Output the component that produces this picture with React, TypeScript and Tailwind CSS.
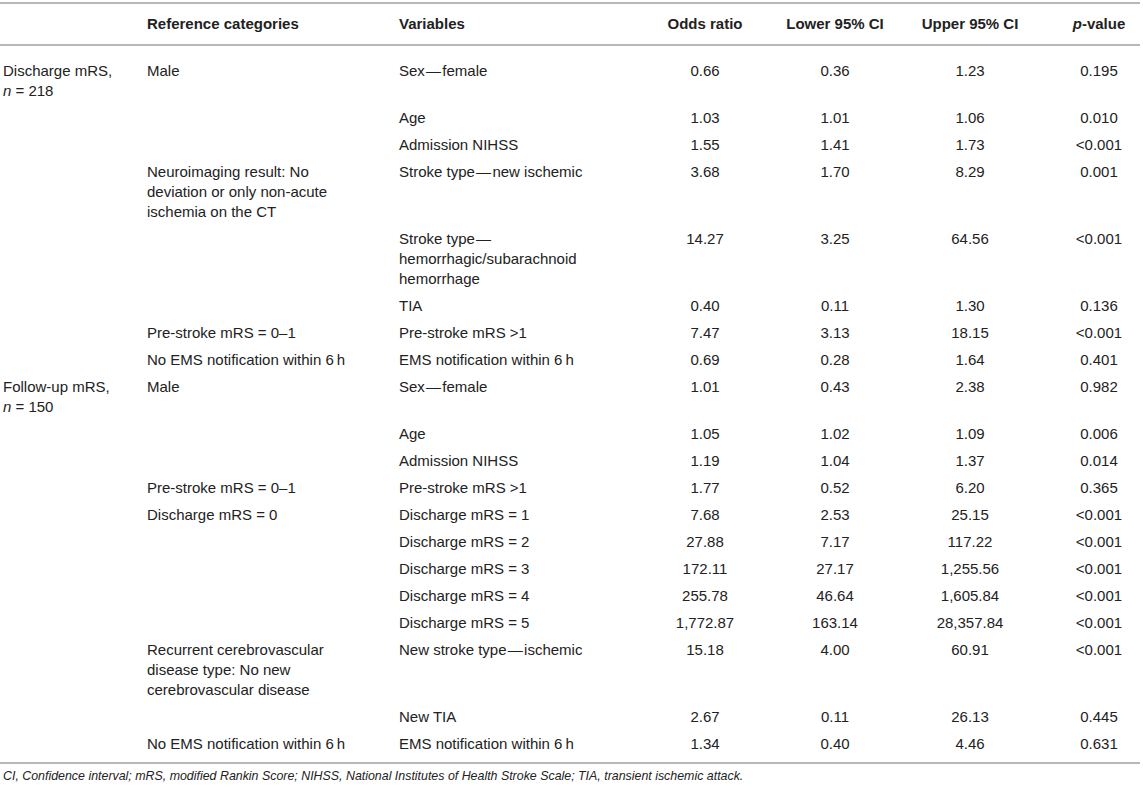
import React from "react";

type Row = {
  label?: React.ReactNode;
  ref?: string[];
  vars: string[];
  or: string;
  lo: string;
  up: string;
  p: string;
};

const D = "\u200A\u2014\u200A";
const NB = "\u202F";

const sec1: Row[] = [
  { label: <>Discharge mRS,<br /><i>n</i> = 218</>, ref: ["Male"], vars: [`Sex${D}female`], or: "0.66", lo: "0.36", up: "1.23", p: "0.195" },
  { vars: ["Age"], or: "1.03", lo: "1.01", up: "1.06", p: "0.010" },
  { vars: ["Admission NIHSS"], or: "1.55", lo: "1.41", up: "1.73", p: "<0.001" },
  { ref: ["Neuroimaging result: No", "deviation or only non-acute", "ischemia on the CT"], vars: [`Stroke type${D}new ischemic`], or: "3.68", lo: "1.70", up: "8.29", p: "0.001" },
  { vars: [`Stroke type${D}`, "hemorrhagic/subarachnoid", "hemorrhage"], or: "14.27", lo: "3.25", up: "64.56", p: "<0.001" },
  { vars: ["TIA"], or: "0.40", lo: "0.11", up: "1.30", p: "0.136" },
  { ref: ["Pre-stroke mRS = 0\u20131"], vars: ["Pre-stroke mRS >1"], or: "7.47", lo: "3.13", up: "18.15", p: "<0.001" },
  { ref: [`No EMS notification within 6${NB}h`], vars: [`EMS notification within 6${NB}h`], or: "0.69", lo: "0.28", up: "1.64", p: "0.401" },
];

const sec2: Row[] = [
  { label: <>Follow-up mRS,<br /><i>n</i> = 150</>, ref: ["Male"], vars: [`Sex${D}female`], or: "1.01", lo: "0.43", up: "2.38", p: "0.982" },
  { vars: ["Age"], or: "1.05", lo: "1.02", up: "1.09", p: "0.006" },
  { vars: ["Admission NIHSS"], or: "1.19", lo: "1.04", up: "1.37", p: "0.014" },
  { ref: ["Pre-stroke mRS = 0\u20131"], vars: ["Pre-stroke mRS >1"], or: "1.77", lo: "0.52", up: "6.20", p: "0.365" },
  { ref: ["Discharge mRS = 0"], vars: ["Discharge mRS = 1"], or: "7.68", lo: "2.53", up: "25.15", p: "<0.001" },
  { vars: ["Discharge mRS = 2"], or: "27.88", lo: "7.17", up: "117.22", p: "<0.001" },
  { vars: ["Discharge mRS = 3"], or: "172.11", lo: "27.17", up: "1,255.56", p: "<0.001" },
  { vars: ["Discharge mRS = 4"], or: "255.78", lo: "46.64", up: "1,605.84", p: "<0.001" },
  { vars: ["Discharge mRS = 5"], or: "1,772.87", lo: "163.14", up: "28,357.84", p: "<0.001" },
  { ref: ["Recurrent cerebrovascular", "disease type: No new", "cerebrovascular disease"], vars: [`New stroke type${D}ischemic`], or: "15.18", lo: "4.00", up: "60.91", p: "<0.001" },
  { vars: ["New TIA"], or: "2.67", lo: "0.11", up: "26.13", p: "0.445" },
  { ref: [`No EMS notification within 6${NB}h`], vars: [`EMS notification within 6${NB}h`], or: "1.34", lo: "0.40", up: "4.46", p: "0.631" },
];

const rows = [...sec1, ...sec2];

function Lines({ items }: { items?: string[] }) {
  if (!items) return null;
  return (
    <>
      {items.map((t, i) => (
        <div key={i} className="whitespace-nowrap">{t}</div>
      ))}
    </>
  );
}

export default function App() {
  return (
    <div className="w-[1143px] h-[787px] bg-white pt-[2px] font-['Liberation_Sans',Arial,sans-serif] text-[15px] leading-[20px] text-[#222]">
      <table className="w-[1140px] table-fixed border-collapse">
        <colgroup>
          <col className="w-[144px]" />
          <col className="w-[252px]" />
          <col className="w-[244px]" />
          <col className="w-[130px]" />
          <col className="w-[130px]" />
          <col className="w-[140px]" />
          <col className="w-[100px]" />
        </colgroup>
        <thead>
          <tr className="border-t-2 border-b-2 border-[#b8b8b8]">
            <th className="py-[10px]"></th>
            <th className="py-[10px] pl-[3px] text-left font-bold">Reference categories</th>
            <th className="py-[10px] pl-[3px] text-left font-bold">Variables</th>
            <th className="py-[10px] text-center font-bold">Odds ratio</th>
            <th className="py-[10px] text-center font-bold">Lower 95% CI</th>
            <th className="py-[10px] text-center font-bold">Upper 95% CI</th>
            <th className="py-[10px] pl-[18px] text-center font-bold"><i>p</i>-value</th>
          </tr>
        </thead>
        <tbody className="border-b-2 border-[#b8b8b8]">
          {rows.map((r, i) => {
            const first = i === 0;
            const last = i === rows.length - 1;
            const pad = `${first ? "pt-[15px]" : "pt-[3px]"} ${last ? "pb-[8px]" : "pb-[4px]"}`;
            return (
              <tr key={i} className="align-top">
                <td className={`${pad} pl-[3px]`}>{r.label}</td>
                <td className={`${pad} pl-[3px]`}><Lines items={r.ref} /></td>
                <td className={`${pad} pl-[3px]`}><Lines items={r.vars} /></td>
                <td className={`${pad} text-center`}>{r.or}</td>
                <td className={`${pad} text-center`}>{r.lo}</td>
                <td className={`${pad} text-center`}>{r.up}</td>
                <td className={`${pad} pl-[18px] text-center`}>{r.p}</td>
              </tr>
            );
          })}
        </tbody>
      </table>
      <p className="pl-[3px] pt-[4px] text-[12.4px] italic leading-[16px]">
        CI, Confidence interval; mRS, modified Rankin Score; NIHSS, National Institutes of Health Stroke Scale; TIA, transient ischemic attack.
      </p>
    </div>
  );
}
